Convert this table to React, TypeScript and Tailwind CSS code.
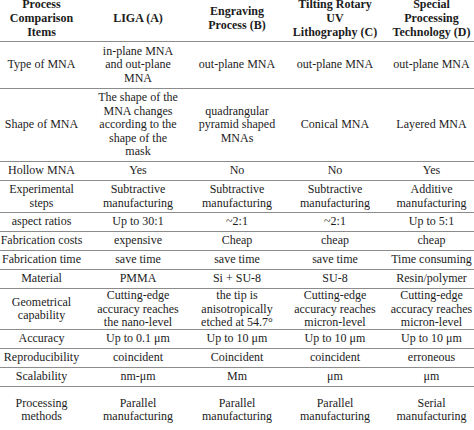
const cols = "grid grid-cols-[83px_110px_88px_108px_85px]";

type Row = { h: string; cells: string[][] };

const rows: Row[] = [
  { h: "h-[47px]", cells: [["Type of MNA"], ["in-plane MNA", "and out-plane", "MNA"], ["out-plane MNA"], ["out-plane MNA"], ["out-plane MNA"]] },
  {
    h: "h-[73px]",
    cells: [
      ["Shape of MNA"],
      ["The shape of the", "MNA changes", "according to the", "shape of the", "mask"],
      ["quadrangular", "pyramid shaped", "MNAs"],
      ["Conical MNA"],
      ["Layered MNA"],
    ],
  },
  { h: "h-[19px]", cells: [["Hollow MNA"], ["Yes"], ["No"], ["No"], ["Yes"]] },
  {
    h: "h-[32px]",
    cells: [
      ["Experimental", "steps"],
      ["Subtractive", "manufacturing"],
      ["Subtractive", "manufacturing"],
      ["Subtractive", "manufacturing"],
      ["Additive", "manufacturing"],
    ],
  },
  { h: "h-[19px]", cells: [["aspect ratios"], ["Up to 30:1"], ["~2:1"], ["~2:1"], ["Up to 5:1"]] },
  { h: "h-[19px]", cells: [["Fabrication costs"], ["expensive"], ["Cheap"], ["cheap"], ["cheap"]] },
  { h: "h-[19px]", cells: [["Fabrication time"], ["save time"], ["save time"], ["save time"], ["Time consuming"]] },
  { h: "h-[19px]", cells: [["Material"], ["PMMA"], ["Si + SU-8"], ["SU-8"], ["Resin/polymer"]] },
  {
    h: "h-[41px]",
    cells: [
      ["Geometrical", "capability"],
      ["Cutting-edge", "accuracy reaches", "the nano-level"],
      ["the tip is", "anisotropically", "etched at 54.7°"],
      ["Cutting-edge", "accuracy reaches", "micron-level"],
      ["Cutting-edge", "accuracy reaches", "micron-level"],
    ],
  },
  { h: "h-[19px]", cells: [["Accuracy"], ["Up to 0.1 μm"], ["Up to 10 μm"], ["Up to 10 μm"], ["Up to 10 μm"]] },
  { h: "h-[19px]", cells: [["Reproducibility"], ["coincident"], ["Coincident"], ["coincident"], ["erroneous"]] },
  { h: "h-[19px]", cells: [["Scalability"], ["nm-μm"], ["Mm"], ["μm"], ["μm"]] },
  {
    h: "h-[47px]",
    cells: [
      ["Processing", "methods"],
      ["Parallel", "manufacturing"],
      ["Parallel", "manufacturing"],
      ["Parallel", "manufacturing"],
      ["Serial", "manufacturing"],
    ],
  },
];

const header = [
  ["Process", "Comparison", "Items"],
  ["LIGA (A)"],
  ["Engraving", "Process (B)"],
  ["Tilting Rotary", "UV", "Lithography (C)"],
  ["Special", "Processing", "Technology (D)"],
];

function Cell({ lines, bold }: { lines: string[]; bold?: boolean }) {
  return (
    <div
      className={
        "flex flex-col items-center justify-center text-center whitespace-nowrap " +
        (bold ? "font-bold leading-[14px]" : "")
      }
    >
      {lines.map((l, i) => (
        <span key={i}>{l}</span>
      ))}
    </div>
  );
}

export default function App() {
  return (
    <div className="w-[474px] h-[430px] overflow-hidden bg-white text-[#1c1c1c] text-[12px] leading-[13.5px] font-['Liberation_Serif',serif]">
      <div className="-mt-[6px]">
        <div className={cols + " h-[48px] border-b border-[#8c8c8c]"}>
          {header.map((c, i) => (
            <Cell key={i} lines={c} bold />
          ))}
        </div>
        {rows.map((r, i) => (
          <div key={i} className={cols + " " + r.h + " border-b border-[#8c8c8c]"}>
            {r.cells.map((c, j) => (
              <Cell key={j} lines={c} />
            ))}
          </div>
        ))}
      </div>
    </div>
  );
}
